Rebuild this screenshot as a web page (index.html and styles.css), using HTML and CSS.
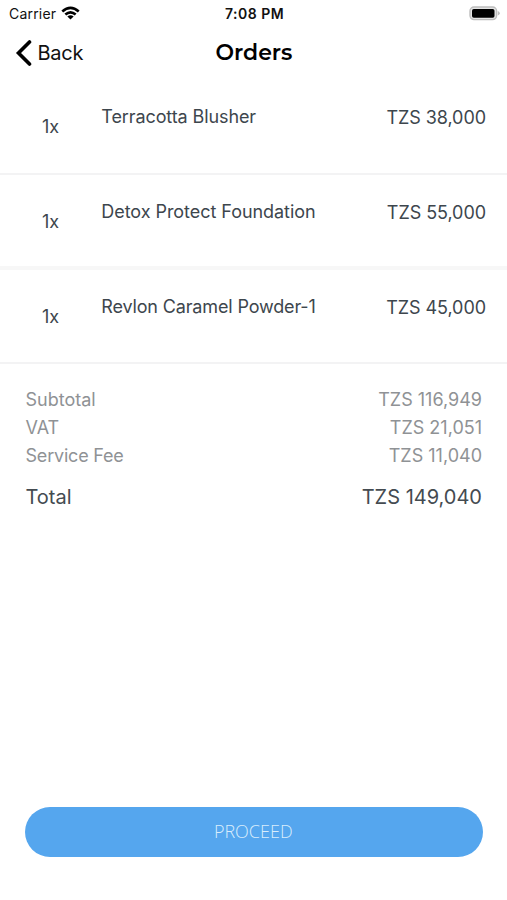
FILE: index.html
```html
<!DOCTYPE html>
<html lang="en">
<head>
<meta charset="utf-8">
<meta name="viewport" content="width=device-width, initial-scale=1">
<title>Orders</title>
<link rel="stylesheet" href="styles.css">
</head>
<body>
<div class="screen">
  <div class="status">
    <div class="carrier"><span class="carrier-name">Carrier</span>
      <svg class="wifi" viewBox="0 0 18 13" fill="none" stroke="#000" stroke-width="2.5"><path d="M1.2 5Q9-1.8 16.8 5M4.1 8Q9 3.7 13.9 8"/><path d="M9 12.7 6 9.8Q9 7.3 12 9.8Z" fill="#000" stroke="none"/></svg>
    </div>
    <div class="time">7:08 PM</div>
    <svg class="battery" viewBox="0 0 31 15"><rect x="1" y="1" width="26.6" height="12.6" rx="4" fill="#e4e4e4" stroke="#bdbdbd" stroke-width="1.4"/><rect x="3" y="2.9" width="22.5" height="8.8" rx="1.8"/><path d="M28.8 5v4.5q2-.8 2-2.25T28.8 5Z" fill="#bdbdbd"/></svg>
  </div>
  <header class="nav">
    <div class="back"><svg class="chevron" viewBox="0 0 17 26" fill="none" stroke="#000" stroke-width="3.6" stroke-linecap="round"><path d="M14.5 2 3.5 13 14.5 24"/></svg><span>Back</span></div>
    <h1 class="title">Orders</h1>
  </header>
  <main>
    <div class="item"><span class="qty">1x</span><span class="name">Terracotta Blusher</span><span class="price">TZS 38,000</span></div>
    <div class="item item-thick"><span class="qty">1x</span><span class="name name-wide">Detox Protect Foundation</span><span class="price">TZS 55,000</span></div>
    <div class="item"><span class="qty">1x</span><span class="name name-tight">Revlon Caramel Powder-1</span><span class="price">TZS 45,000</span></div>
    <div class="summary">
      <div class="line"><span>Subtotal</span><span>TZS 116,949</span></div>
      <div class="line"><span>VAT</span><span>TZS 21,051</span></div>
      <div class="line"><span class="fee">Service Fee</span><span>TZS 11,040</span></div>
      <div class="line total"><span>Total</span><span>TZS 149,040</span></div>
    </div>
  </main>
  <button class="proceed">PROCEED</button>
</div>
</body>
</html>
```
FILE: styles.css
```css
* { box-sizing: border-box; }
body { margin: 0; background: #fff; font-family: Inter, "Liberation Sans", sans-serif; }
.screen { height: 900px; display: flex; flex-direction: column; overflow: hidden; }
.status { height: 26px; display: grid; grid-template-columns: 1fr auto 1fr; align-items: center; padding: 0 7px 0 9px; color: #111; }
.carrier { display: flex; align-items: center; gap: 5px; font-size: 14px; letter-spacing: .2px; }
.wifi { width: 19px; height: 14px; }
.time { font-size: 14px; font-weight: 600; letter-spacing: .5px; }
.battery { width: 31px; height: 15px; justify-self: end; }
.nav { height: 53px; margin-bottom: 1px; display: grid; grid-template-columns: 1fr auto 1fr; align-items: center; padding: 0 14px 0 15px; }
.back { display: flex; align-items: center; gap: 5.5px; font-size: 20px; letter-spacing: -.25px; color: #111; }
.chevron { width: 17px; height: 26px; }
.title { margin: 0; font: 600 22px/28px Montserrat, Inter, sans-serif; }
.item { height: 95px; display: grid; grid-template-columns: 101.3px 1fr auto; align-items: start; padding: 25px 21px 0 0; border-bottom: 2px solid #f3f3f4; font-size: 18px; line-height: 24px; color: #3d464d; }
.item-thick { border-bottom: 4px solid #f7f7f7; }
.item-thick + .item { height: 94px; }
.qty { padding: 10px 0 0 42px; letter-spacing: -.1px; }
.name { letter-spacing: -.1px; }
.name-wide { letter-spacing: -.05px; }
.name-tight { letter-spacing: -.15px; }
.price { padding-top: 1px; letter-spacing: -.06px; }
.summary { padding: 22px 25px 0 25.5px; }
.line { display: flex; justify-content: space-between; font-size: 18px; line-height: 28px; color: #8f9295; }
.fee { letter-spacing: -.2px; }
.total { margin-top: 13px; font-size: 20px; color: #444b51; }
.proceed { margin: auto 24.5px 43.5px 25px; height: 50px; padding: 0 1px 1px 0; border: 0; border-radius: 25px; background: #55a6ee; color: #d9edfc; font: 300 18px/48px "Open Sans", sans-serif; }
```
